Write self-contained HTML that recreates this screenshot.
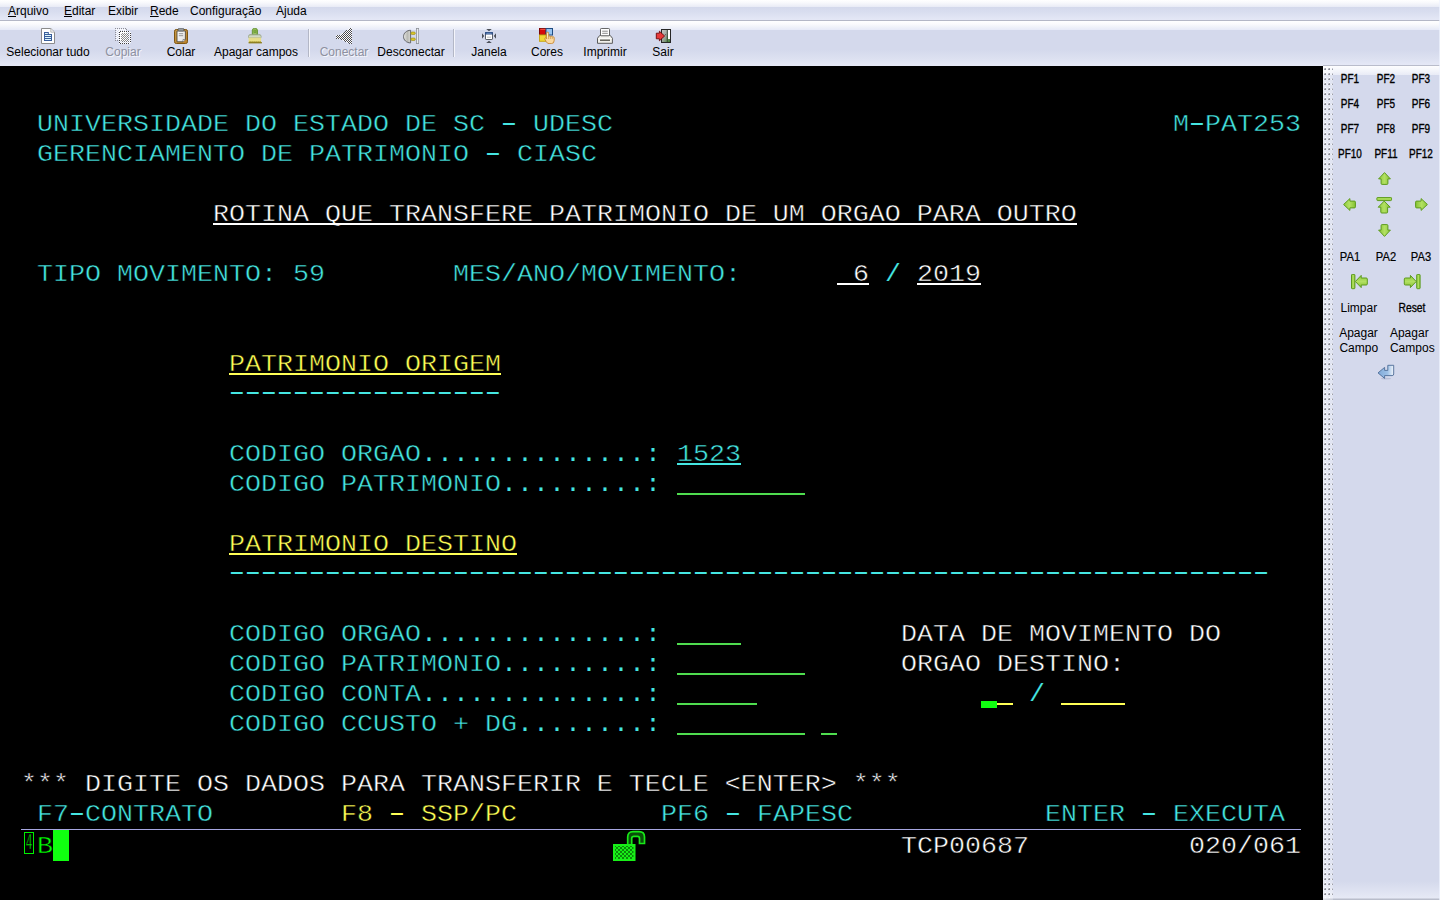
<!DOCTYPE html>
<html lang="pt-BR">
<head>
<meta charset="utf-8">
<title>pw3270</title>
<style>
html,body{margin:0;padding:0;}
body{width:1440px;height:900px;overflow:hidden;position:relative;background:#000;font-family:"Liberation Sans",sans-serif;font-size:12px;color:#000;}
#menubar{position:absolute;left:0;top:0;width:1440px;height:20px;background:linear-gradient(#ffffff 0px,#f7f8fc 3px,#eceef7 6px,#e8ebf6 7px,#d4d9ec 7.5px,#dadff0 13px,#e5e8f6 20px);border-bottom:1px solid #b4b7c6;}
#menubar span{position:absolute;top:4px;line-height:15px;white-space:pre;}
#menubar u{text-decoration:underline;text-underline-offset:1px;}
#toolbar{position:absolute;left:0;top:21px;width:1440px;height:45px;background:linear-gradient(#ffffff 0px,#fafafd 3px,#f0f2f9 6px,#e8ebf8 8.5px,#d4d9ec 9px,#d4d9ec 29px,#dde1f1 38px,#e6e9f7 45px);}
.tb{position:absolute;top:0;height:44px;}
.tb i{position:absolute;top:7px;left:50%;margin-left:-8px;width:16px;height:16px;display:block;}
.tb b{position:absolute;top:24px;left:0;right:0;text-align:center;font-weight:normal;line-height:14px;white-space:pre;}
.tb.dis b{color:#8d90a0;text-shadow:1px 1px 0 #f4f5fb;}
.sep{position:absolute;top:8px;width:1px;height:28px;background:#b3b7c6;border-right:1px solid #f4f5fb;}
#term{position:absolute;left:0;top:66px;width:1323px;height:834px;background:#000;}
.t{position:absolute;font-family:"Liberation Mono",monospace;font-size:26.667px;line-height:30px;height:30px;white-space:pre;-webkit-text-stroke:0.5px #000;transform:scaleY(.93);transform-origin:0 22px;}
.d{font-size:42.86px;letter-spacing:-9.716px;-webkit-text-stroke:0;transform:scaleY(.6);transform-origin:0 24px;margin-left:-5px;margin-top:-4px;color:#33ffff;}
.c{color:#45e6e2;}.y{color:#ffff55;}.w{color:#ffffff;}.g{color:#00ff00;}
.ul{position:absolute;height:2px;}
#side{position:absolute;left:1323px;top:66px;width:117px;height:834px;background:linear-gradient(#fdfdfe 0px,#f2f4fa 5px,#e8ebf6 9px,#d4d9ec 9.5px,#d4d9ec 815px,#e6e9f5 832px,#b9bdcb 833px);box-shadow:0 -1px 0 #b9bccb;}
#grip{position:absolute;left:0;top:0;width:10px;height:834px;background:linear-gradient(90deg,rgba(255,255,255,.5),rgba(255,255,255,.25));}
#side span{position:absolute;line-height:14px;white-space:pre;text-align:center;}
.p{-webkit-text-stroke:0.15px #000;}
.h{display:inline-block;position:relative;top:-1.5px;transform:scaleX(1.62);-webkit-text-stroke:0;}
</style>
</head>
<body>
<div id="menubar">
<span style="left:8px"><u>A</u>rquivo</span>
<span style="left:64px"><u>E</u>ditar</span>
<span style="left:108px">Exibir</span>
<span style="left:150px"><u>R</u>ede</span>
<span style="left:190px">Configuração</span>
<span style="left:276px">Ajuda</span>
</div>
<div id="toolbar">
<div class="tb" style="left:3px;width:90px"><i><svg viewBox="0 0 16 16" width="16" height="16"><path d="M1.5 0.5H10.8L14.5 4.2V15.5H1.5Z" fill="#fff" stroke="#8b8b8b"/><path d="M10.8 0.8V4.2H14.3" fill="#f2f2f2" stroke="#a9a9a9" stroke-width=".8"/><path d="M4 4H8.8V6H12V13H4Z" fill="#3a5e9c"/><path d="M5 5.5H7.8M5 7.5H11M5 9.5H11M5 11.5H11" stroke="#dff6fb" stroke-width="1"/></svg></i><b>Selecionar tudo</b></div>
<div class="tb dis" style="left:98px;width:50px"><i><svg viewBox="0 0 16 16" width="16" height="16" shape-rendering="crispEdges"><defs><pattern id="pa" width="2" height="2" patternUnits="userSpaceOnUse"><rect width="1" height="1" fill="#8e8e96"/><rect x="1" y="1" width="1" height="1" fill="#8e8e96"/></pattern><pattern id="pb" width="2" height="2" patternUnits="userSpaceOnUse"><rect width="1" height="1" fill="#fff"/><rect x="1" y="1" width="1" height="1" fill="#fff"/></pattern><pattern id="pc" width="2" height="2" patternUnits="userSpaceOnUse"><rect width="1" height="1" fill="#3c3c40"/><rect x="1" y="1" width="1" height="1" fill="#3c3c40"/></pattern><pattern id="pd" width="2" height="2" patternUnits="userSpaceOnUse"><rect x="1" width="1" height="1" fill="#fff"/><rect y="1" width="1" height="1" fill="#fff"/></pattern></defs><path d="M0 0H10L12 2V13H0Z" fill="url(#pb)"/><path d="M0 0H10L12 2V3H11V2H10V1H1V12H4V13H0Z" fill="url(#pa)"/><path d="M4 3H14L16 5V14L14 16H4Z" fill="url(#pd)"/><path d="M4 3H14L16 5V14L14 16H4ZM5 4V15H14L15 14V5L14 4Z" fill-rule="evenodd" fill="url(#pc)"/><path d="M6 5H14V14H6Z" fill="url(#pc)" opacity=".6"/></svg></i><b>Copiar</b></div>
<div class="tb" style="left:156px;width:50px"><i><svg viewBox="0 0 16 16" width="16" height="16"><defs><linearGradient id="gb" x1="0" y1="0" x2="1" y2="1"><stop offset="0" stop-color="#c99a45"/><stop offset="1" stop-color="#b8802a"/></linearGradient><linearGradient id="gp" x1="0" y1="0" x2="1" y2="1"><stop offset="0" stop-color="#ffffff"/><stop offset="1" stop-color="#dcdcdc"/></linearGradient></defs><rect x="1.5" y="1.5" width="13" height="14" rx="1.8" fill="url(#gb)" stroke="#7d5510"/><path d="M4 3H12.4V11.5L10 13.8H4Z" fill="url(#gp)" stroke="#544c3c" stroke-width=".9"/><path d="M10 13.8V11.5H12.4" fill="#fff" stroke="#555" stroke-width=".6"/><path d="M5.8 5.7H10.2M5.8 7.7H10.2" stroke="#8c8c8c" stroke-width=".9"/><rect x="5.2" y="0.3" width="5.6" height="2.6" rx="1" fill="#9a9c9e" stroke="#555a5e" stroke-width=".7"/></svg></i><b>Colar</b></div>
<div class="tb" style="left:211px;width:90px"><i><svg viewBox="0 0 16 16" width="16" height="16"><defs><linearGradient id="gh" x1="0" y1="0" x2="1" y2="0"><stop offset="0" stop-color="#7aa83a"/><stop offset=".5" stop-color="#b9dc80"/><stop offset="1" stop-color="#6c9a2e"/></linearGradient><linearGradient id="gf" x1="0" y1="0" x2="0" y2="1"><stop offset="0" stop-color="#aebd9c"/><stop offset="1" stop-color="#e4e8da"/></linearGradient><linearGradient id="gy" x1="0" y1="0" x2="0" y2="1"><stop offset="0" stop-color="#e2da8c"/><stop offset="1" stop-color="#efe382"/></linearGradient></defs><path d="M4.3 6.9V2.3Q4.3 .3 6.9 .3Q9.5 .3 9.5 2.3V6.9Z" fill="url(#gh)" stroke="#5f8f2c" stroke-width=".8"/><rect x="6" y="1.7" width="1.8" height="3.4" rx=".9" fill="#8fbf4e" stroke="#568426" stroke-width=".6"/><path d="M.5 9.6V8.2Q.5 6.4 3 6.4H10.6Q13.1 6.4 13.1 8.2V9.6Z" fill="url(#gf)" stroke="#8f9f80" stroke-width=".7"/><rect x=".6" y="9.5" width="12.5" height="4.8" fill="url(#gy)"/><path d="M.6 14H13.9V15.4H.6Z" fill="#8e7f22"/><path d="M1.1 14.1l1-1 1 1 1-1 1 1 1-1 1 1 1-1 1 1 1-1 1 1 1-1 .9 1" stroke="#a59835" stroke-width=".7" fill="none"/></svg></i><b>Apagar campos</b></div>
<div class="sep" style="left:308px"></div>
<div class="tb dis" style="left:314px;width:60px"><i><svg viewBox="0 0 16 16" width="16" height="16" shape-rendering="crispEdges"><defs><pattern id="pe" width="2" height="2" patternUnits="userSpaceOnUse"><rect width="1" height="1" fill="#4a4a50"/><rect x="1" y="1" width="1" height="1" fill="#4a4a50"/><rect x="1" width="1" height="1" fill="#fff"/><rect y="1" width="1" height="1" fill="#fff"/></pattern></defs><path d="M0 7H4L14 0H16V16H14L4 11H0Z" fill="url(#pe)"/></svg></i><b>Conectar</b></div>
<div class="tb" style="left:374px;width:74px"><i><svg viewBox="0 0 16 16" width="16" height="16"><defs><linearGradient id="gd" x1="0" y1="0" x2="1" y2="0"><stop offset="0" stop-color="#e8e8e6"/><stop offset=".55" stop-color="#b9bab4"/><stop offset="1" stop-color="#d8d8d4"/></linearGradient></defs><path d="M7.6 2.3V14.9C3.5 14.9 .5 12 .5 8.6S3.5 2.3 7.6 2.3Z" fill="url(#gd)" stroke="#5a5c60" stroke-width=".9"/><rect x="7.9" y="4" width="4.4" height="2.5" rx="1.2" fill="#d8c62a" stroke="#9a8a10" stroke-width=".6"/><rect x="7.9" y="10" width="4.4" height="2.5" rx="1.2" fill="#d8c62a" stroke="#9a8a10" stroke-width=".6"/><rect x="13.4" y=".4" width="2.3" height="15.2" fill="#e9ebf0" stroke="#8d9096" stroke-width=".8"/></svg></i><b>Desconectar</b></div>
<div class="sep" style="left:453px"></div>
<div class="tb" style="left:464px;width:50px"><i><svg viewBox="0 0 16 16" width="16" height="16"><rect x="4.5" y="4.5" width="7" height="7" rx=".6" fill="#fff" stroke="#5a5e68"/><rect x="4" y="4" width="8" height="2.6" rx=".6" fill="#2c4d84"/><path d="M5.4 5.3H10.6" stroke="#7f9fd0" stroke-width=".8"/><path d="M6 9.2H10" stroke="#c9c9c9" stroke-width="1.2"/><path d="M5.2 1H10.8L8 3.2Z M5.2 15H10.8L8 12.8Z M1 5.2V10.8L3.2 8Z M15 5.2V10.8L12.8 8Z" fill="#4b4f57"/></svg></i><b>Janela</b></div>
<div class="tb" style="left:522px;width:50px"><i><svg viewBox="0 0 16 16" width="16" height="16"><rect x=".5" y=".5" width="6.5" height="6.5" fill="#d60a0a" stroke="#7c0505"/><rect x="7" y=".5" width="6.5" height="6.5" fill="#96c4f0" stroke="#1f4b80"/><rect x=".5" y="7" width="6.5" height="6.3" fill="#efd935" stroke="#c9a81a"/><path d="M1.3 1.3H6.5" stroke="#ff6a5a" stroke-width=".8"/><path d="M7.6 10.8V5.2Q7.6 4.1 8.6 4.1Q9.6 4.1 9.6 5.2V8.6Q9.7 7.9 10.5 7.9Q11.3 7.9 11.4 8.8Q11.6 8.2 12.3 8.2Q13.1 8.2 13.2 9.1Q13.5 8.6 14.2 8.7Q15.2 8.8 15.2 9.9V12.4Q15.2 15.6 12.4 15.6H10Q8.2 15.6 7.3 13.8L5.9 11.2Q5.5 10.2 6.3 9.9Q7 9.7 7.6 10.8Z" fill="#fbd9a0" stroke="#c4842c" stroke-width=".85" stroke-linejoin="round"/><path d="M9.6 8.6V11M11.4 8.8V11M13.2 9.1V11" stroke="#c4842c" stroke-width=".6" fill="none"/><path d="M8.6 5.2V9.5" stroke="#fff4dc" stroke-width=".7"/></svg></i><b>Cores</b></div>
<div class="tb" style="left:575px;width:60px"><i><svg viewBox="0 0 16 16" width="16" height="16"><path d="M.5 15.3V10.2L2.8 7.4H13.2L15.4 10.2V15.3Z" fill="#f1f1ec" stroke="#4c4c4c" stroke-width=".9" stroke-linejoin="round"/><rect x="3.5" y=".5" width="9" height="7.3" rx=".8" fill="#fff" stroke="#575757" stroke-width=".9"/><path d="M5.2 3.2H10.8M5.2 5.3H10.8" stroke="#8a8a8a" stroke-width="1"/><path d="M3 12.2H13" stroke="#55554d" stroke-width="1.4"/><path d="M1.2 10.6H14.8" stroke="#fff" stroke-width=".8"/></svg></i><b>Imprimir</b></div>
<div class="tb" style="left:638px;width:50px"><i><svg viewBox="0 0 16 16" width="16" height="16"><defs><linearGradient id="ge" x1="0" y1="0" x2="1" y2="1"><stop offset="0" stop-color="#c9c9c9"/><stop offset=".5" stop-color="#9aa39a"/><stop offset="1" stop-color="#2f7a1f"/></linearGradient></defs><rect x="6.5" y="1.5" width="9" height="13" fill="url(#ge)" stroke="#262626"/><rect x="13" y="2" width="2" height="9" fill="#fff"/><path d="M12.3 2V14.5" stroke="#2a3a2a" stroke-width=".8"/><path d="M1.3 5.2H4.4V3.2L9.6 8L4.4 12.8V10.8H1.3Z" fill="#e83a3a" stroke="#6e0606" stroke-width=".9" stroke-linejoin="miter"/><circle cx="10.4" cy="6.8" r=".45" fill="#111"/></svg></i><b>Sair</b></div>
</div>
<div id="term">
<div class="t c" style="left:37px;top:43px">UNIVERSIDADE DO ESTADO DE SC <span class="h">-</span> UDESC</div>
<div class="t c" style="left:1173px;top:43px">M<span class="h">-</span>PAT253</div>
<div class="t c" style="left:37px;top:73px">GERENCIAMENTO DE PATRIMONIO <span class="h">-</span> CIASC</div>
<div class="t w" style="left:213px;top:133px">ROTINA QUE TRANSFERE PATRIMONIO DE UM ORGAO PARA OUTRO</div>
<div class="ul" style="left:213px;top:157px;width:864px;background:#ffffff"></div>
<div class="t c" style="left:37px;top:193px">TIPO MOVIMENTO: 59</div>
<div class="t c" style="left:453px;top:193px">MES/ANO/MOVIMENTO:</div>
<div class="t w" style="left:837px;top:193px"> 6</div>
<div class="ul" style="left:837px;top:217px;width:32px;background:#ffffff"></div>
<div class="t c p" style="left:885px;top:193px">/</div>
<div class="t w" style="left:917px;top:193px">2019</div>
<div class="ul" style="left:917px;top:217px;width:64px;background:#ffffff"></div>
<div class="t y" style="left:229px;top:283px">PATRIMONIO ORIGEM</div>
<div class="ul" style="left:229px;top:307px;width:272px;background:#ffff55"></div>
<div class="t c d" style="left:229px;top:313px">-----------------</div>
<div class="t c" style="left:229px;top:373px">CODIGO ORGAO<span class="p">..............:</span></div>
<div class="t c" style="left:677px;top:373px">1523</div>
<div class="ul" style="left:677px;top:397px;width:64px;background:#45e6e2"></div>
<div class="t c" style="left:229px;top:403px">CODIGO PATRIMONIO<span class="p">.........:</span></div>
<div class="ul" style="left:677px;top:427px;width:128px;background:#4fdd4f"></div>
<div class="t y" style="left:229px;top:463px">PATRIMONIO DESTINO</div>
<div class="ul" style="left:229px;top:487px;width:288px;background:#ffff55"></div>
<div class="t c d" style="left:229px;top:493px">-----------------------------------------------------------------</div>
<div class="t c" style="left:229px;top:553px">CODIGO ORGAO<span class="p">..............:</span></div>
<div class="ul" style="left:677px;top:577px;width:64px;background:#4fdd4f"></div>
<div class="t w" style="left:901px;top:553px">DATA DE MOVIMENTO DO</div>
<div class="t c" style="left:229px;top:583px">CODIGO PATRIMONIO<span class="p">.........:</span></div>
<div class="ul" style="left:677px;top:607px;width:128px;background:#4fdd4f"></div>
<div class="t w" style="left:901px;top:583px">ORGAO DESTINO:</div>
<div class="t c" style="left:229px;top:613px">CODIGO CONTA<span class="p">..............:</span></div>
<div class="ul" style="left:677px;top:637px;width:80px;background:#4fdd4f"></div>
<div class="ul" style="left:981px;top:637px;width:32px;background:#ffff55"></div>
<div class="t c p" style="left:1029px;top:613px">/</div>
<div class="ul" style="left:1061px;top:637px;width:64px;background:#ffff55"></div>
<div class="t c" style="left:229px;top:643px">CODIGO CCUSTO + DG<span class="p">........:</span></div>
<div class="ul" style="left:677px;top:667px;width:128px;background:#4fdd4f"></div>
<div class="ul" style="left:821px;top:667px;width:16px;background:#4fdd4f"></div>
<div class="t w" style="left:21px;top:703px">*** DIGITE OS DADOS PARA TRANSFERIR E TECLE &lt;ENTER&gt; ***</div>
<div class="t c" style="left:37px;top:733px">F7<span class="h">-</span>CONTRATO</div>
<div class="t y" style="left:341px;top:733px">F8 <span class="h">-</span> SSP/PC</div>
<div class="t c" style="left:661px;top:733px">PF6 <span class="h">-</span> FAPESC</div>
<div class="t c" style="left:1045px;top:733px">ENTER <span class="h">-</span> EXECUTA</div>
<div style="position:absolute;left:981px;top:635px;width:16px;height:7px;background:#10ff10"></div>
<div style="position:absolute;left:21px;top:763px;width:1280px;height:1px;background:#a6a6e0"></div>
<div style="position:absolute;left:24px;top:766px;width:7.5px;height:19.5px;border:1.5px solid #00f000;"><span style="position:absolute;left:50%;top:0;width:14px;margin-left:-7px;text-align:center;font-family:'Liberation Mono',monospace;font-size:22px;line-height:22px;color:#00f000;transform:scaleX(.5);-webkit-text-stroke:0.5px #000">4</span></div>
<div class="t g" style="left:37px;top:765px">B</div>
<div style="position:absolute;left:53px;top:764px;width:15.5px;height:31px;background:#10ff10"></div>
<svg style="position:absolute;left:610px;top:763px" width="40" height="34" viewBox="0 0 40 34"><defs><pattern id="chk" width="4" height="4" patternUnits="userSpaceOnUse"><rect width="4" height="4" fill="#18ee18"/><rect x="0" y="0" width="2" height="2" fill="#0a8a0a"/><rect x="2" y="2" width="2" height="2" fill="#0a8a0a"/></pattern></defs><rect x="3" y="15" width="22.5" height="17" fill="#18f018"/><rect x="5" y="17" width="18.5" height="13" fill="url(#chk)"/><path d="M17.7 15 V8 Q17.7 2.7 23 2.7 H29 Q34.5 2.7 34.5 8 V14.5 H29.5 V9.5 Q29.5 7.3 27.5 7.3 H24 Q21.7 7.3 21.7 9.5 V15" fill="#0a4d0a" stroke="#18e818" stroke-width="1.7"/></svg>
<div class="t w" style="left:901px;top:765px">TCP00687</div>
<div class="t w" style="left:1189px;top:765px">020/061</div>
</div>
<div id="side"><div id="grip"><svg width="10" height="834" viewBox="0 0 10 834" shape-rendering="crispEdges" style="position:absolute;left:0;top:0"><defs><pattern id="gp2" x="0" y="0" width="4" height="5" patternUnits="userSpaceOnUse"><rect x="2" y="1" width="1" height="1" fill="#fff"/><rect x="0" y="3" width="1" height="1" fill="#f6f7fb"/><rect x="1" y="2" width="2" height="2" fill="#9d9ea8"/><rect x="1" y="2" width="1" height="1" fill="#c9cad3"/><rect x="2" y="3" width="1" height="1" fill="#85868f"/></pattern></defs><rect x="0" y="0" width="10" height="832" fill="url(#gp2)"/></svg></div>
<svg width="0" height="0" style="position:absolute"><defs>
<linearGradient id="ga" x1="0" y1="0" x2="1" y2="0"><stop offset="0" stop-color="#8ecb3c"/><stop offset=".5" stop-color="#b2e062"/><stop offset="1" stop-color="#86c232"/></linearGradient>
<linearGradient id="gv" x1="0" y1="0" x2="0" y2="1"><stop offset="0" stop-color="#8ecb3c"/><stop offset=".5" stop-color="#b2e062"/><stop offset="1" stop-color="#86c232"/></linearGradient>
<path id="arw" d="M6.5 .6L12.4 6.9H9.9V11.4Q9.9 12.4 8.9 12.4H4.1Q3.1 12.4 3.1 11.4V6.9H.6Z"/>
</defs></svg><svg style="position:absolute;left:55px;top:106px" width="13" height="13" viewBox="0 0 13 13"><use href="#arw" transform="rotate(0 6.5 6.5)" fill="url(#ga)" stroke="#5c9a1d" stroke-width="1" stroke-linejoin="round"/></svg><svg style="position:absolute;left:20px;top:132px" width="13" height="13" viewBox="0 0 13 13"><use href="#arw" transform="rotate(270 6.5 6.5)" fill="url(#gv)" stroke="#5c9a1d" stroke-width="1" stroke-linejoin="round"/></svg><svg style="position:absolute;left:92px;top:132px" width="13" height="13" viewBox="0 0 13 13"><use href="#arw" transform="rotate(90 6.5 6.5)" fill="url(#gv)" stroke="#5c9a1d" stroke-width="1" stroke-linejoin="round"/></svg><svg style="position:absolute;left:55px;top:158px" width="13" height="13" viewBox="0 0 13 13"><use href="#arw" transform="rotate(180 6.5 6.5)" fill="url(#ga)" stroke="#5c9a1d" stroke-width="1" stroke-linejoin="round"/></svg><svg style="position:absolute;left:53.3px;top:130.6px" width="17" height="17" viewBox="0 0 17 17"><rect x=".9" y=".4" width="14.6" height="3.2" rx=".8" fill="url(#gv)" stroke="#5c9a1d" stroke-width="1"/><path d="M8.2 4.1L14.2 10.2H11.6V15Q11.6 16 10.6 16H5.8Q4.8 16 4.8 15V10.2H2.2Z" fill="url(#ga)" stroke="#5c9a1d" stroke-width="1" stroke-linejoin="round"/></svg><svg style="position:absolute;left:27.6px;top:208.3px" width="18" height="16" viewBox="0 0 18 16"><path d="M4.4 7.5L10.2 1.4V4H15.2Q16.3 4 16.3 5V10Q16.3 11 15.2 11H10.2V13.6Z" fill="url(#gv)" stroke="#5c9a1d" stroke-width="1" stroke-linejoin="round"/><rect x=".5" y=".4" width="3.4" height="14.3" rx=".7" fill="url(#ga)" stroke="#5c9a1d" stroke-width="1"/></svg><svg style="position:absolute;left:80.4px;top:208.3px" width="18" height="16" viewBox="0 0 18 16"><path d="M13.2 7.5L7.4 1.4V4H2.4Q1.3 4 1.3 5V10Q1.3 11 2.4 11H7.4V13.6Z" fill="url(#gv)" stroke="#5c9a1d" stroke-width="1" stroke-linejoin="round"/><rect x="13.7" y=".4" width="3.4" height="14.3" rx=".7" fill="url(#ga)" stroke="#5c9a1d" stroke-width="1"/></svg><svg style="position:absolute;left:54px;top:298px" width="18" height="16" viewBox="0 0 18 16"><defs><linearGradient id="gn" x1="0" y1="0" x2="1" y2="0"><stop offset="0" stop-color="#7fa9d8"/><stop offset=".6" stop-color="#9cc0e6"/><stop offset="1" stop-color="#f2f6fb"/></linearGradient></defs><ellipse cx="9" cy="14.6" rx="5" ry=".9" fill="#b9bfd6"/><path d="M1 8.9L7.6 3.4V6.4H10.8V1.3H16.7V10Q16.7 11.6 15.1 11.6H7.6V14.4Z" fill="url(#gn)" stroke="#4d6c96" stroke-width=".9" stroke-linejoin="round"/></svg>
<span style="left:5.3px;top:6px;width:44px;transform:scaleX(.83);-webkit-text-stroke:.35px #000">PF1</span>
<span style="left:40.6px;top:6px;width:44px;transform:scaleX(.83);-webkit-text-stroke:.35px #000">PF2</span>
<span style="left:76.2px;top:6px;width:44px;transform:scaleX(.83);-webkit-text-stroke:.35px #000">PF3</span>
<span style="left:5.3px;top:31px;width:44px;transform:scaleX(.83);-webkit-text-stroke:.35px #000">PF4</span>
<span style="left:40.6px;top:31px;width:44px;transform:scaleX(.83);-webkit-text-stroke:.35px #000">PF5</span>
<span style="left:76.2px;top:31px;width:44px;transform:scaleX(.83);-webkit-text-stroke:.35px #000">PF6</span>
<span style="left:5.3px;top:56px;width:44px;transform:scaleX(.83);-webkit-text-stroke:.35px #000">PF7</span>
<span style="left:40.6px;top:56px;width:44px;transform:scaleX(.83);-webkit-text-stroke:.35px #000">PF8</span>
<span style="left:76.2px;top:56px;width:44px;transform:scaleX(.83);-webkit-text-stroke:.35px #000">PF9</span>
<span style="left:5.3px;top:81px;width:44px;transform:scaleX(.83);-webkit-text-stroke:.35px #000">PF10</span>
<span style="left:40.6px;top:81px;width:44px;transform:scaleX(.83);-webkit-text-stroke:.35px #000">PF11</span>
<span style="left:76.2px;top:81px;width:44px;transform:scaleX(.83);-webkit-text-stroke:.35px #000">PF12</span>
<span style="left:5.3px;top:184px;width:44px;transform:scaleX(.93);-webkit-text-stroke:.2px #000">PA1</span>
<span style="left:40.6px;top:184px;width:44px;transform:scaleX(.93);-webkit-text-stroke:.2px #000">PA2</span>
<span style="left:76.2px;top:184px;width:44px;transform:scaleX(.93);-webkit-text-stroke:.2px #000">PA3</span>
<span style="left:10.8px;top:235px;width:50px">Limpar</span>
<span style="left:64.3px;top:235px;width:50px;transform:scaleX(.86);-webkit-text-stroke:.3px #000">Reset</span>
<span style="left:10.5px;top:260px;width:50px">Apagar</span>
<span style="left:61.3px;top:260px;width:50px">Apagar</span>
<span style="left:10.8px;top:275px;width:50px">Campo</span>
<span style="left:64.3px;top:275px;width:50px">Campos</span>
</div>
<div style="position:absolute;left:1439px;top:0;width:1px;height:900px;background:rgba(240,243,255,.7)"></div>
</body>
</html>
